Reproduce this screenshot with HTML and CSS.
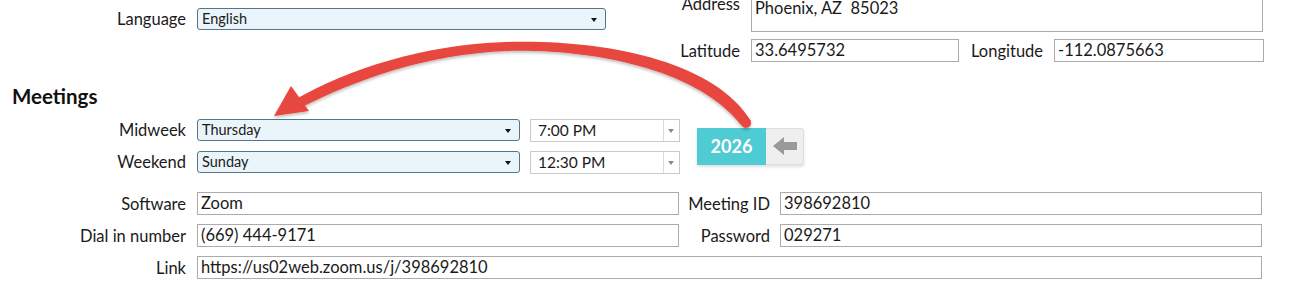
FILE: index.html
```html
<!DOCTYPE html>
<html lang="en">
<head>
    <meta charset="UTF-8">
    <title>Congregation settings</title>
    <link rel="stylesheet" href="styles.css">
</head>
<body>
    <div class="page">
        <div class="top">
            <div class="lang-col">
                <div class="row">
                    <span class="label lbl-main">Language</span>
                    <div class="select select-lang"><span>English</span><i class="caret"></i></div>
                </div>
            </div>
            <div class="addr-col">
                <div class="row row-addr">
                    <span class="label lbl-addr">Address</span>
                    <div class="field field-addr">Phoenix, AZ&nbsp; 85023</div>
                </div>
                <div class="row row-geo">
                    <span class="label lbl-addr">Latitude</span>
                    <div class="field field-lat">33.6495732</div>
                    <span class="label lbl-long">Longitude</span>
                    <div class="field field-long">-112.0875663</div>
                </div>
            </div>
        </div>

        <h2 class="section-title">Meetings</h2>

        <div class="meetings">
            <div class="meet-rows">
                <div class="row">
                    <span class="label lbl-main">Midweek</span>
                    <div class="select select-day"><span>Thursday</span><i class="caret"></i></div>
                    <div class="time"><span>7:00 PM</span><b class="time-drop"><i class="caret caret-grey"></i></b></div>
                </div>
                <div class="row">
                    <span class="label lbl-main">Weekend</span>
                    <div class="select select-day"><span>Sunday</span><i class="caret"></i></div>
                    <div class="time"><span>12:30 PM</span><b class="time-drop"><i class="caret caret-grey"></i></b></div>
                </div>
            </div>
            <div class="year-badge">
                <span class="year">2026</span>
                <span class="year-back">
                    <svg width="26" height="20" viewBox="0 0 26 20">
                        <path d="M1 10 L12 1 L12 6 L25 6 L25 14 L12 14 L12 19 Z" fill="#9a9a9a"/>
                    </svg>
                </span>
            </div>
        </div>

        <div class="online">
            <span class="label">Software</span>
            <div class="field">Zoom</div>
            <span class="label">Meeting ID</span>
            <div class="field">398692810</div>

            <span class="label">Dial in number</span>
            <div class="field">(669) 444-9171</div>
            <span class="label">Password</span>
            <div class="field">029271</div>

            <span class="label">Link</span>
            <div class="field field-wide">https://us02web.zoom.us/j/398692810</div>
        </div>
    </div>

    <!-- callout arrow drawn over the form -->
    <svg class="callout" width="1292" height="299" viewBox="0 0 1292 299">
        <defs>
            <filter id="shade" x="-10%" y="-10%" width="120%" height="130%">
                <feDropShadow dx="0" dy="2" stdDeviation="1.5" flood-color="#000" flood-opacity="0.25"/>
            </filter>
        </defs>
        <g filter="url(#shade)" fill="#e8463f">
            <path d="M751 121 C714 60 602 39 506 42 C421 45 350 69 296 99 L302 107 C356 80 426 54 507 51 C596 49 698 70 741 125 Z"/>
            <circle cx="746" cy="123" r="5"/>
            <path d="M274 116 L291 86 L309 111 Z"/>
        </g>
    </svg>
</body>
</html>
```

FILE: styles.css
```css
* {
    margin: 0;
    padding: 0;
    box-sizing: border-box;
}

body {
    background: #fff;
    font-family: 'Lato', 'Open Sans', sans-serif;
    font-size: 16.5px;
    color: #1a1a1a;
    width: 1292px;
    height: 299px;
    overflow: hidden;
    position: relative;
}

.row {
    display: flex;
    align-items: center;
}

.label {
    white-space: nowrap;
    text-align: right;
}

.lbl-main {
    width: 186px;
    margin-right: 11px;
}

/* top block */
.top {
    display: flex;
}

.lang-col {
    width: 680px;
    padding-top: 8px;
}

.addr-col {
    margin-top: -9px;
}

.row-addr {
    align-items: flex-start;
}

.row-addr .label {
    padding-top: 3px;
}

.lbl-addr {
    width: 60px;
    margin-right: 11px;
}

.row-geo {
    margin-top: 7px;
}

.lbl-long {
    width: 72px;
    margin: 0 11px 0 12px;
}

.field {
    border: 1px solid #ababab;
    background: #fff;
    height: 23px;
    line-height: 21px;
    padding: 0 3px;
    white-space: nowrap;
    overflow: hidden;
}

.field-addr {
    width: 512px;
    height: 41px;
    line-height: 25px;
    padding-top: 4px;
    align-self: flex-start;
}

.field-lat {
    width: 208px;
}

.field-long {
    width: 210px;
}

/* dropdowns */
.select {
    position: relative;
    height: 22px;
    border: 1px solid #56748a;
    border-radius: 3px;
    background: #eaf4fb;
    font-size: 14.5px;
    line-height: 20px;
    padding: 0 4px;
}

.select-lang {
    width: 409px;
}

.select-day {
    width: 323px;
}

.caret {
    position: absolute;
    right: 8px;
    top: 9px;
    width: 0;
    height: 0;
    border-left: 3px solid transparent;
    border-right: 3px solid transparent;
    border-top: 4px solid #111;
}

.caret-grey {
    right: 5px;
    border-top-color: #8a8a8a;
}

.time {
    position: relative;
    width: 150px;
    height: 23px;
    margin-left: 10px;
    border: 1px solid #c9c9c9;
    font-size: 15.5px;
    line-height: 21px;
    padding: 0 7px;
}

.time-drop {
    position: absolute;
    top: 0;
    right: 0;
    width: 16px;
    height: 21px;
    border-left: 1px solid #dcdcdc;
}

/* meetings */
.section-title {
    font-size: 20.5px;
    font-weight: 700;
    line-height: 24px;
    margin-top: 22px;
    padding-left: 12px;
    color: #111;
}

.meetings {
    display: flex;
    align-items: center;
    margin-top: 11px;
}

.meet-rows {
    display: flex;
    flex-direction: column;
    gap: 10px;
}

.meet-rows .row {
    height: 22px;
}

.year-badge {
    display: flex;
    margin-left: 17px;
    height: 37px;
    box-shadow: 0 2px 3px rgba(0, 0, 0, 0.12);
    border-radius: 3px;
}

.year {
    width: 69px;
    background: #4fcbd3;
    color: #fff;
    font-weight: 700;
    font-size: 18px;
    line-height: 37px;
    text-align: center;
}

.year-back {
    width: 38px;
    background: #efefef;
    border: 1px solid #dedede;
    border-left: none;
    border-radius: 0 3px 3px 0;
    display: flex;
    align-items: center;
    justify-content: center;
}

/* online meeting grid */
.online {
    display: grid;
    grid-template-columns: 197px 482px 101px 482px;
    grid-auto-rows: 23px;
    row-gap: 9px;
    align-items: center;
    margin-top: 19px;
}

.online .label {
    padding-right: 11px;
}

.online .label:nth-child(4n+3) {
    padding-right: 10px;
}

.field-wide {
    grid-column: 2 / 5;
}

.callout {
    position: absolute;
    top: 0;
    left: 0;
    pointer-events: none;
}
```
